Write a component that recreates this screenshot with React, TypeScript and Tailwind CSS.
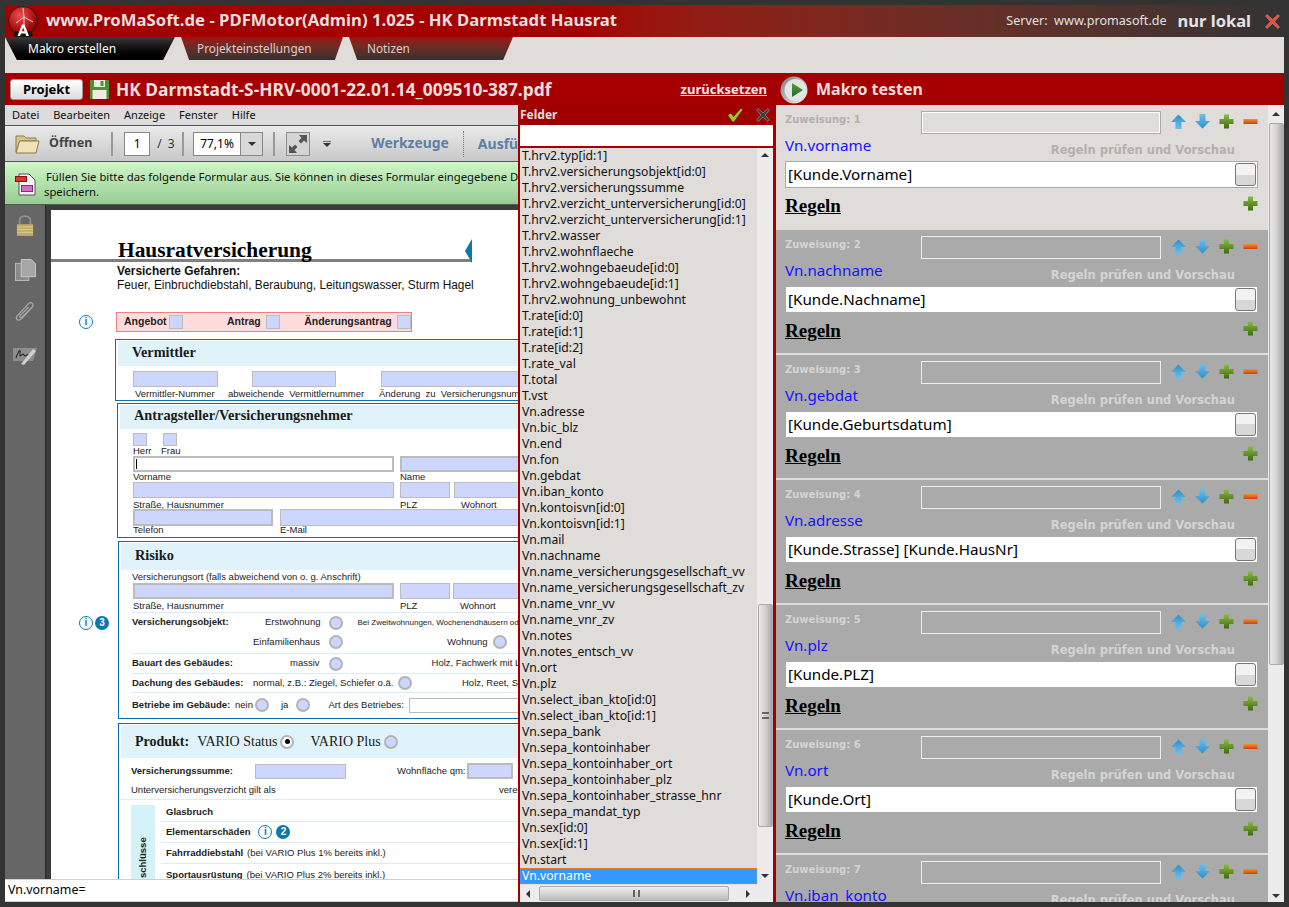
import React from 'react';

const uiFont = "font-['Noto_Sans','DejaVu_Sans',sans-serif]";
const pdfFont = "font-['Liberation_Sans',Arial,sans-serif]";

const fields = [
  'T.hrv2.typ[id:1]',
  'T.hrv2.versicherungsobjekt[id:0]',
  'T.hrv2.versicherungssumme',
  'T.hrv2.verzicht_unterversicherung[id:0]',
  'T.hrv2.verzicht_unterversicherung[id:1]',
  'T.hrv2.wasser',
  'T.hrv2.wohnflaeche',
  'T.hrv2.wohngebaeude[id:0]',
  'T.hrv2.wohngebaeude[id:1]',
  'T.hrv2.wohnung_unbewohnt',
  'T.rate[id:0]',
  'T.rate[id:1]',
  'T.rate[id:2]',
  'T.rate_val',
  'T.total',
  'T.vst',
  'Vn.adresse',
  'Vn.bic_blz',
  'Vn.end',
  'Vn.fon',
  'Vn.gebdat',
  'Vn.iban_konto',
  'Vn.kontoisvn[id:0]',
  'Vn.kontoisvn[id:1]',
  'Vn.mail',
  'Vn.nachname',
  'Vn.name_versicherungsgesellschaft_vv',
  'Vn.name_versicherungsgesellschaft_zv',
  'Vn.name_vnr_vv',
  'Vn.name_vnr_zv',
  'Vn.notes',
  'Vn.notes_entsch_vv',
  'Vn.ort',
  'Vn.plz',
  'Vn.select_iban_kto[id:0]',
  'Vn.select_iban_kto[id:1]',
  'Vn.sepa_bank',
  'Vn.sepa_kontoinhaber',
  'Vn.sepa_kontoinhaber_ort',
  'Vn.sepa_kontoinhaber_plz',
  'Vn.sepa_kontoinhaber_strasse_hnr',
  'Vn.sepa_mandat_typ',
  'Vn.sex[id:0]',
  'Vn.sex[id:1]',
  'Vn.start',
  'Vn.vorname',
];

const assignments = [
  { field: 'Vn.vorname', value: '[Kunde.Vorname]' },
  { field: 'Vn.nachname', value: '[Kunde.Nachname]' },
  { field: 'Vn.gebdat', value: '[Kunde.Geburtsdatum]' },
  { field: 'Vn.adresse', value: '[Kunde.Strasse] [Kunde.HausNr]' },
  { field: 'Vn.plz', value: '[Kunde.PLZ]' },
  { field: 'Vn.ort', value: '[Kunde.Ort]' },
  { field: 'Vn.iban_konto', value: '' },
];

const ArrowIcon = ({ down = false }: { down?: boolean }) => (
  <svg width="15" height="15" viewBox="0 0 15 15" className={down ? 'rotate-180' : ''}>
    <defs>
      <linearGradient id="blueUp" x1="0" y1="0" x2="0" y2="1">
        <stop offset="0" stopColor="#2f8fc8" />
        <stop offset="1" stopColor="#6cc0ee" />
      </linearGradient>
    </defs>
    <path d="M7.5 0.5 L15 8 L10.5 8 L10.5 15 L4.5 15 L4.5 8 L0 8 Z" fill="url(#blueUp)" />
  </svg>
);

const PlusIcon = () => (
  <svg width="15" height="15" viewBox="0 0 15 15">
    <defs>
      <linearGradient id="greenPlus" x1="0" y1="0" x2="0" y2="1">
        <stop offset="0" stopColor="#8db84a" />
        <stop offset="1" stopColor="#3f6c10" />
      </linearGradient>
    </defs>
    <path d="M5 0.5 H10 V5 H14.5 V10 H10 V14.5 H5 V10 H0.5 V5 H5 Z" fill="url(#greenPlus)" />
  </svg>
);

const MinusIcon = () => (
  <svg width="15" height="15" viewBox="0 0 15 15">
    <defs>
      <linearGradient id="orangeMinus" x1="0" y1="0" x2="0" y2="1">
        <stop offset="0" stopColor="#f09030" />
        <stop offset="1" stopColor="#d04010" />
      </linearGradient>
    </defs>
    <rect x="0.5" y="5" width="14" height="5" fill="url(#orangeMinus)" />
  </svg>
);

const Logo = () => (
  <svg width="32" height="33" viewBox="0 0 32 33" className="shrink-0">
    <defs>
      <radialGradient id="logoRed" cx="0.4" cy="0.3" r="0.8">
        <stop offset="0" stopColor="#e85050" />
        <stop offset="0.6" stopColor="#b01010" />
        <stop offset="1" stopColor="#600000" />
      </radialGradient>
    </defs>
    <circle cx="16" cy="16" r="14.5" fill="url(#logoRed)" stroke="#222" strokeWidth="1" />
    <path d="M17 12 L16 3 M17 12 L26 17 M17 12 L9 18 M17 12 L17 22" stroke="#f0d0d0" strokeWidth="1" fill="none" />
    <path d="M6 31 Q16 35 26 31 L24 26 L8 26 Z" fill="#181818" />
    <path d="M10.5 31 L15 19.5 L17.5 19.5 L22 31 L19.3 31 L18.4 28.4 L14 28.4 L13.1 31 Z M14.8 26.3 L17.6 26.3 L16.2 22.6 Z" fill="#fff" fillRule="evenodd" />
  </svg>
);

const FloppyIcon = () => (
  <svg width="21" height="21" viewBox="0 0 21 21" className="shrink-0">
    <rect x="0.5" y="0.5" width="20" height="20" fill="#4e8f38" stroke="#20401a" />
    <rect x="5" y="1" width="11" height="7" fill="#e8efe0" />
    <rect x="11.5" y="2" width="3" height="5" fill="#4e8f38" />
    <rect x="3.5" y="11" width="14" height="9" fill="#f4e8e8" />
  </svg>
);

const PlayIcon = () => (
  <svg width="28" height="28" viewBox="0 0 28 28" className="shrink-0">
    <defs>
      <linearGradient id="playRim" x1="0" y1="0" x2="1" y2="1">
        <stop offset="0" stopColor="#7c7c7c" />
        <stop offset="1" stopColor="#f4f4f4" />
      </linearGradient>
      <linearGradient id="playGreen" x1="0" y1="0" x2="0" y2="1">
        <stop offset="0" stopColor="#5aa040" />
        <stop offset="1" stopColor="#1c6a28" />
      </linearGradient>
    </defs>
    <circle cx="14" cy="14" r="13.5" fill="url(#playRim)" />
    <circle cx="15.5" cy="14" r="11" fill="#e4e4e4" />
    <path d="M12 7 L23 14 L12 21 Z" fill="url(#playGreen)" />
  </svg>
);

const FolderIcon = () => (
  <svg width="25" height="20" viewBox="0 0 25 20" className="shrink-0">
    <path d="M1 18 V2 H9 L11 4 H21 V7 H5 Z" fill="#d8c48c" stroke="#8a7a50" />
    <path d="M1 19 L4.5 7 H24 L21 19 Z" fill="#f2e3b4" stroke="#8a7a50" />
  </svg>
);

const ExpandIcon = () => (
  <svg width="24" height="24" viewBox="0 0 24 24" className="shrink-0">
    <rect x="0.5" y="0.5" width="23" height="23" fill="#d4d4d4" stroke="#8c8c8c" />
    <path d="M13 3 H21 V11 L18 8.5 L15 11.5 L12.5 9 L15.5 6 Z M11 21 H3 V13 L6 15.5 L9 12.5 L11.5 15 L8.5 18 Z" fill="#555" />
  </svg>
);

const LockIcon = () => (
  <svg width="18" height="22" viewBox="0 0 20 24" className="mb-[3px]">
    <path d="M4 11 V6 C4 -0.5 16 -0.5 16 6 V11" fill="none" stroke="#909090" strokeWidth="2" />
    <rect x="1" y="10" width="18" height="13" fill="#c2aa6a" />
    <path d="M1 13 H19 M1 16 H19 M1 19 H19" stroke="#e0d090" strokeWidth="1" />
  </svg>
);

const PagesIcon = () => (
  <svg width="21" height="23" viewBox="0 0 22 24">
    <rect x="0.5" y="4.5" width="14" height="18" fill="#8a8a8a" stroke="#b8b8b8" />
    <path d="M6.5 0.5 H17 L21.5 5 V18.5 H6.5 Z" fill="#a6a6a6" stroke="#cacaca" />
  </svg>
);

const ClipIcon = () => (
  <svg width="22" height="23" viewBox="0 0 24 26" className="mb-[3px]">
    <path d="M20 7 L8 20 C4 24 0 20 4 16 L16 3 C19 0 23 4 20 7 L9 18 C7 20 5 18 7 16 L16 7" fill="none" stroke="#a8a8a8" strokeWidth="1.5" />
  </svg>
);

const SignIcon = () => (
  <svg width="24" height="20" viewBox="0 0 24 20">
    <path d="M0 2 H24 L20 15 H0 Z" fill="#8e8e8e" />
    <path d="M3 12 C6 3 8 3 7 8 C6 13 10 6 11 9 C12 11 14 9 15 8" stroke="#303030" strokeWidth="1.2" fill="none" />
    <path d="M8 18 L20 3 L23 5 L11 19 Z" fill="#d0d0d0" />
  </svg>
);

const InfoIcon = () => (
  <span className="flex h-[14px] w-[14px] shrink-0 items-center justify-center rounded-full border border-[#0a78b0] bg-white text-[10px] leading-none font-bold text-[#0a78b0]">
    i
  </span>
);

const NumberBadge = ({ n }: { n: number }) => (
  <span className="flex h-[14px] w-[14px] shrink-0 items-center justify-center rounded-full bg-[#0a78b0] text-[10px] leading-none font-bold text-white">
    {n}
  </span>
);

const Radio = ({ checked = false, className = '' }: { checked?: boolean; className?: string }) => (
  <span className={`flex h-[14px] w-[14px] shrink-0 items-center justify-center rounded-full border-2 border-[#b4b4b4] ${checked ? 'bg-white' : 'bg-[#ccd6ff]'} ${className}`}>
    {checked && <span className="h-[5px] w-[5px] rounded-full bg-black" />}
  </span>
);

// blue form field with a caption below it
const Field = ({
  className,
  label,
  labelClass = 'h-[13px] leading-[13px]',
  boxClass = 'h-[16px] border bg-[#ccd6ff]',
}: {
  className: string;
  label?: string;
  labelClass?: string;
  boxClass?: string;
}) => (
  <div className={`shrink-0 ${className}`}>
    <div className={`border-[#bcbcbc] ${boxClass}`} />
    {label && <div className={`text-[9.5px] whitespace-pre text-[#222] ${labelClass}`}>{label}</div>}
  </div>
);

const SectionHead = ({ children, className }: { children: React.ReactNode; className: string }) => (
  <div className={`mx-[2px] mt-[1px] flex items-center bg-[#e1f3fa] pb-[2px] pl-[14px] font-['Liberation_Serif',serif] text-[14.3px] font-bold text-[#1a1a1a] ${className}`}>
    {children}
  </div>
);

const PdfPage = () => (
  <div className={`h-full w-[560px] overflow-hidden bg-white ${pdfFont}`}>
    {/* title */}
    <div className="pt-[28px]">
      <div className="flex h-[21px] w-[421px] items-start justify-between">
        <h1 className="ml-[67px] font-['Liberation_Serif',serif] text-[21.4px] leading-[25px] font-bold text-black">Hausratversicherung</h1>
        <span className="mt-[1px] h-[24px] w-[7px] bg-[#0a78b0] [clip-path:polygon(100%_0,100%_100%,0_50%)]" />
      </div>
      <div className="h-[3px] w-[421px] bg-[#808080]" />
      <div className="ml-[66px] mt-[2px] text-[11.87px] leading-[14px] whitespace-nowrap text-[#111]">
        <div className="font-bold">Versicherte Gefahren:</div>
        <div>Feuer, Einbruchdiebstahl, Beraubung, Leitungswasser, Sturm Hagel</div>
      </div>
    </div>

    {/* antrag type */}
    <div className="mt-[20px] flex h-[20px] items-center">
      <div className="flex w-[65px] pl-[28px]"><InfoIcon /></div>
      <div className="flex h-[20px] w-[296px] items-center border border-[#f08080] bg-[#ffdcdc] pl-[7px] text-[10.5px] font-bold text-[#222]">
        <span>Angebot</span>
        <span className="ml-[2px] h-[14px] w-[15px] border border-[#bcbcbc] bg-[#ccd6ff]" />
        <span className="ml-[44px]">Antrag</span>
        <span className="ml-[5px] h-[14px] w-[15px] border border-[#bcbcbc] bg-[#ccd6ff]" />
        <span className="ml-[24px]">Änderungsantrag</span>
        <span className="ml-[5px] h-[14px] w-[15px] border border-[#bcbcbc] bg-[#ccd6ff]" />
      </div>
    </div>

    {/* vermittler */}
    <div className="ml-[64px] mt-[7px] h-[62px] border border-[#0a70a8]">
      <SectionHead className="h-[25px]">Vermittler</SectionHead>
      <div className="mt-[5px] flex pl-[17px]">
        <Field className="w-[85px]" label="Vermittler-Nummer" labelClass="ml-[2px] h-[13px] leading-[13px]" />
        <Field className="ml-[34px] w-[84px]" label="abweichende  Vermittlernummer" labelClass="ml-[-24px] h-[13px] leading-[13px]" />
        <Field className="ml-[45px] w-[200px]" label="Änderung  zu  Versicherungsnummer" labelClass="ml-[-2px] h-[13px] leading-[13px]" />
      </div>
    </div>

    {/* antragsteller */}
    <div className="ml-[66px] mt-[2px] h-[135px] border border-[#0a70a8]">
      <SectionHead className="h-[24px]">Antragsteller/Versicherungsnehmer</SectionHead>
      <div className="mt-[4px] flex pl-[15px]">
        <div className="w-[30px]">
          <div className="h-[13px] w-[14px] border border-[#bcbcbc] bg-[#ccd6ff]" />
          <div className="h-[10px] text-[9.5px] leading-[10px] text-[#222]">Herr</div>
        </div>
        <div>
          <div className="h-[13px] w-[14px] border border-[#bcbcbc] bg-[#ccd6ff]" />
          <div className="ml-[-2px] h-[10px] text-[9.5px] leading-[10px] text-[#222]">Frau</div>
        </div>
      </div>
      <div className="flex pl-[15px]">
        <div className="w-[261px] shrink-0">
          <div className="flex h-[16px] items-center border-2 border-[#bcbcbc] bg-white pl-[1px]"><span className="h-[10px] w-[1px] bg-black" /></div>
          <div className="h-[9px] text-[9.5px] leading-[9px] text-[#222]">Vorname</div>
        </div>
        <Field className="ml-[6px] w-[200px]" boxClass="h-[16px] border-2 bg-[#ccd6ff]" label="Name" labelClass="h-[9px] leading-[9px]" />
      </div>
      <div className="mt-[1px] flex pl-[15px]">
        <Field className="w-[261px]" label="Straße, Hausnummer" />
        <Field className="ml-[6px] w-[50px]" label="PLZ" />
        <Field className="ml-[4px] w-[100px]" label="Wohnort" labelClass="ml-[7px] h-[13px] leading-[13px]" />
      </div>
      <div className="mt-[-2px] flex pl-[15px]">
        <Field className="w-[140px]" boxClass="h-[17px] border-2 bg-[#ccd6ff]" label="Telefon" labelClass="h-[7px] leading-[7px]" />
        <Field className="ml-[7px] w-[250px]" boxClass="h-[17px] border bg-[#ccd6ff]" label="E-Mail" labelClass="h-[7px] leading-[7px]" />
      </div>
    </div>

    {/* risiko */}
    <div className="mt-[3px] flex h-[178px]">
      <div className="flex w-[67px] shrink-0 gap-[2px] pl-[28px] pt-[75px]"><InfoIcon /><NumberBadge n={3} /></div>
      <div className="w-full border border-[#0a70a8]">
        <SectionHead className="h-[27px]">Risiko</SectionHead>
        <div className="mt-[1px] pl-[13px] text-[9.5px] leading-[12px] whitespace-nowrap text-[#222]">Versicherungsort (falls abweichend von o. g. Anschrift)</div>
        <div className="flex pl-[14px]">
          <Field className="w-[261px]" boxClass="h-[16px] border-2 bg-[#ccd6ff]" label="Straße, Hausnummer" />
          <Field className="ml-[6px] w-[50px]" label="PLZ" />
          <Field className="ml-[3px] w-[100px]" label="Wohnort" labelClass="ml-[7px] h-[13px] leading-[13px]" />
        </div>
        <div className="ml-[13px] h-[41px] border-t border-[#d8eef6]">
          <div className="flex h-[19px] items-center text-[9.5px] whitespace-nowrap text-[#222]">
            <span className="w-[133px] font-bold">Versicherungsobjekt:</span>
            <span>Erstwohnung</span>
            <Radio className="ml-[9px]" />
            <span className="ml-[14px] text-[8px]">Bei Zweitwohnungen, Wochenendhäusern oder</span>
          </div>
          <div className="flex h-[20px] items-center text-[9.5px] whitespace-nowrap text-[#222]">
            <span className="ml-[121px]">Einfamilienhaus</span>
            <Radio className="ml-[9px]" />
            <span className="ml-[104px]">Wohnung</span>
            <Radio className="ml-[5px]" />
          </div>
        </div>
        <div className="ml-[13px] flex h-[20px] items-center border-t border-[#d8eef6] text-[9.5px] whitespace-nowrap text-[#222]">
          <span className="w-[158px] font-bold">Bauart des Gebäudes:</span>
          <span>massiv</span>
          <Radio className="ml-[9px]" />
          <span className="ml-[89px]">Holz, Fachwerk mit Lehm</span>
        </div>
        <div className="ml-[13px] flex h-[19px] items-center border-t border-[#d8eef6] text-[9.5px] whitespace-nowrap text-[#222]">
          <span className="w-[121px] font-bold">Dachung des Gebäudes:</span>
          <span className="w-[145px]">normal, z.B.: Ziegel, Schiefer o.ä.</span>
          <Radio />
          <span className="ml-[50px]">Holz, Reet, Stroh</span>
        </div>
        <div className="ml-[13px] flex h-[25px] items-center border-t border-[#d8eef6] text-[9.5px] whitespace-nowrap text-[#222]">
          <span className="w-[103px] font-bold">Betriebe im Gebäude:</span>
          <span>nein</span>
          <Radio className="ml-[2px]" />
          <span className="ml-[12px]">ja</span>
          <Radio className="ml-[8px]" />
          <span className="ml-[18px]">Art des Betriebes:</span>
          <span className="ml-[5px] h-[15px] w-[150px] border border-[#bcbcbc] bg-white" />
        </div>
      </div>
    </div>

    {/* produkt */}
    <div className="ml-[67px] mt-[4px] h-[170px] border border-[#0a70a8]">
      <div className="mx-[2px] mt-[1px] flex h-[33px] items-center bg-[#e1f3fa] pl-[14px] font-['Liberation_Serif',serif] text-[14px] font-bold text-[#1a1a1a]">
        <span>Produkt:</span>
        <span className="ml-[8px] font-normal">VARIO Status</span>
        <Radio checked className="ml-[3px]" />
        <span className="ml-[16px] font-normal">VARIO Plus</span>
        <Radio className="ml-[3px]" />
      </div>
      <div className="mt-[5px] flex h-[16px] items-center pl-[12px] text-[9.5px] whitespace-nowrap text-[#222]">
        <span className="w-[124px] font-bold">Versicherungssumme:</span>
        <span className="h-[15px] w-[91px] border border-[#bcbcbc] bg-[#ccd6ff]" />
        <span className="ml-[51px] w-[70px]">Wohnfläche qm:</span>
        <span className="h-[16px] w-[46px] border-2 border-[#bcbcbc] bg-[#ccd6ff]" />
      </div>
      <div className="mt-[3px] flex h-[18px] items-center border-b border-[#d8eef6] pl-[12px] text-[9.5px] whitespace-nowrap text-[#222]">
        <span className="w-[368px]">Unterversicherungsverzicht  gilt  als</span>
        <span>vereinbart</span>
      </div>
      <div className="ml-[12px] mt-[5px] flex">
        <div className="flex h-[120px] w-[24px] shrink-0 justify-center bg-[#d5f1fa] pt-[33px]">
          <span className="h-[40px] rotate-180 text-[9.5px] leading-none font-bold whitespace-nowrap text-[#222] [writing-mode:vertical-rl]">schlüsse</span>
        </div>
        <div className="ml-[6px] w-full text-[9.5px] whitespace-nowrap text-[#222]">
          <div className="flex h-[17px] items-center border-b border-[#d8eef6] pb-[2px] pl-[5px] font-bold">Glasbruch</div>
          <div className="flex h-[21px] items-center border-b border-[#d8eef6] pl-[5px] font-bold">
            Elementarschäden
            <span className="ml-[8px]"><InfoIcon /></span>
            <span className="ml-[4px]"><NumberBadge n={2} /></span>
          </div>
          <div className="flex h-[21px] items-center border-b border-[#d8eef6] pl-[5px]">
            <b>Fahrraddiebstahl</b><span className="ml-[4px]">(bei VARIO Plus 1% bereits inkl.)</span>
          </div>
          <div className="flex h-[22px] items-center pl-[5px]">
            <b>Sportausrüstung</b><span className="ml-[4px]">(bei VARIO Plus 2% bereits inkl.)</span>
          </div>
        </div>
      </div>
    </div>
  </div>
);

const ScrollArrow = ({ dir }: { dir: 'up' | 'down' | 'left' | 'right' }) => {
  const shape = {
    up: 'border-x-[4px] border-b-[4px] border-x-transparent border-b-[#333]',
    down: 'border-x-[4px] border-t-[4px] border-x-transparent border-t-[#333]',
    left: 'border-y-[4px] border-r-[4px] border-y-transparent border-r-[#333]',
    right: 'border-y-[4px] border-l-[4px] border-y-transparent border-l-[#333]',
  }[dir];
  return <span className={`h-0 w-0 ${shape}`} />;
};

const FieldList = () => (
  <div className={`flex h-full w-[255px] shrink-0 flex-col border-l-2 border-[#a00000] bg-[#a00000] ${uiFont}`}>
    <div className="flex h-[20px] shrink-0 items-center justify-between pr-[3px]">
      <span className="text-[12px] font-bold text-[#e8dcdc]">Felder</span>
      <div className="flex items-center gap-[13px]">
        <svg width="16" height="14" viewBox="0 0 16 14">
          <path d="M1 7 L4 5.5 L6.5 9 L14 0.5 L15.5 1.5 L7 13.5 L5.5 13.5 Z" fill="#8fd030" />
        </svg>
        <svg width="14" height="14" viewBox="0 0 14 14">
          <path d="M2 0.5 L7 5 L12 0.5 L13.5 2 L9 7 L13.5 12 L12 13.5 L7 9 L2 13.5 L0.5 12 L5 7 L0.5 2 Z" fill="#3a3a3a" stroke="#b0b0b0" strokeWidth="0.6" />
        </svg>
      </div>
    </div>
    <div className="h-[21px] shrink-0 bg-white" />
    <div className="mt-[2px] flex min-h-0 flex-1 bg-[#e0dcd9]">
      <div className="flex min-w-0 flex-1 flex-col">
        <div className="min-h-0 flex-1 overflow-hidden">
          <ul className="text-[12.2px] leading-[16px] whitespace-nowrap text-[#111]">
            {fields.map((f) => (
              <li key={f} className={`pl-[2px] ${f === 'Vn.vorname' ? 'bg-[#3399ff] text-white outline-1 -outline-offset-1 outline-[#e08020] outline-dotted' : ''}`}>{f}</li>
            ))}
          </ul>
        </div>
        <div className="flex h-[17px] shrink-0 items-center bg-[#ececec]">
          <span className="flex w-[16px] justify-center"><ScrollArrow dir="left" /></span>
          <div className="ml-[3px] flex h-[15px] w-[190px] items-center justify-center rounded-[2px] border border-[#aaa] bg-gradient-to-b from-[#f0f0f0] to-[#bbb] pl-[4px]">
            <span className="h-[7px] w-[7px] border-x-2 border-[#666]" />
          </div>
          <span className="ml-[11px] flex w-[16px] justify-center"><ScrollArrow dir="right" /></span>
        </div>
      </div>
      <div className="flex w-[16px] shrink-0 flex-col items-center bg-[#ececec]">
        <span className="mt-[4px] flex h-[6px] items-center"><ScrollArrow dir="up" /></span>
        <div className="mt-[446px] flex h-[223px] w-[15px] items-center justify-center rounded-[2px] border border-[#aaa] bg-gradient-to-r from-[#e8e8e8] via-[#d0d0d0] to-[#a8a8a8]">
          <span className="h-[7px] w-[7px] border-y-2 border-[#666]" />
        </div>
        <span className="mt-[46px] flex h-[6px] items-center"><ScrollArrow dir="down" /></span>
      </div>
    </div>
  </div>
);

const AssignmentCard = ({ index, field, value }: { index: number; field: string; value: string }) => {
  const first = index === 0;
  const muted = first ? 'text-[#b4b0ae]' : 'text-[#d4d4d4]';
  return (
    <div className={`h-[125px] shrink-0 pl-[9px] pr-[10px] ${first ? 'bg-[#e0dcd9]' : 'border-b-2 border-[#dedede] bg-[#aaaaaa]'}`}>
      <div className="flex h-[29px] items-end">
        <span className={`w-[136px] pb-[7px] font-['DejaVu_Sans',sans-serif] text-[10px] font-bold ${muted}`}>Zuweisung: {index + 1}</span>
        <div className={`h-[23px] w-[241px] border ${first ? 'border-[#aaa] shadow-[inset_0_0_0_1px_#fff]' : 'border-[#eee]'}`} />
        <div className="mb-[1px] ml-[10px] flex h-[23px] items-center gap-[9px]">
          <ArrowIcon />
          <ArrowIcon down />
          <PlusIcon />
          <MinusIcon />
        </div>
      </div>
      <div className="mt-[-4px] flex h-[26px] items-end justify-between">
        <span className={`${uiFont} text-[15.2px] leading-[22px] text-[#1414ff]`}>{field}</span>
        <span className={`mb-[-3px] mr-[23px] font-['DejaVu_Sans',sans-serif] text-[11.5px] font-bold ${muted}`}>Regeln prüfen und Vorschau</span>
      </div>
      <div className="mt-[5px] flex h-[27px] items-center justify-between border border-[#aaa] bg-white pl-[2px] pr-[1px]">
        <span className={`${uiFont} text-[15.2px] text-black`}>{value}</span>
        <span className="h-[23px] w-[21px] rounded-[3px] border border-[#777] bg-gradient-to-b from-[#f2f2f2] from-50% to-[#d8d8d8] to-50%" />
      </div>
      <div className="mt-[7px] flex items-start justify-between">
        <span className="font-['Liberation_Serif',serif] text-[19px] leading-[22px] font-bold text-black underline">Regeln</span>
        <span className="mt-[1px]"><PlusIcon /></span>
      </div>
    </div>
  );
};

export default function App() {
  return (
    <div className={`flex h-[907px] w-[1289px] flex-col overflow-hidden bg-[#333] p-[5px] ${uiFont}`}>
      {/* title bar */}
      <div className="flex h-[32px] shrink-0 items-center bg-gradient-to-r from-[#a50000] from-45% to-[#333] pl-[2px] pr-[4px]">
        <Logo />
        <span className="mb-[3px] ml-[7px] text-[16.7px] font-bold whitespace-nowrap text-[#e8dede]">www.ProMaSoft.de - PDFMotor(Admin) 1.025 - HK Darmstadt Hausrat</span>
        <span className="ml-auto text-[12.6px] text-[#e0e0e0]">Server:&nbsp; www.promasoft.de</span>
        <span className="ml-[11px] text-[16.5px] font-bold text-[#e4e4e4]">nur lokal</span>
        <svg width="15" height="15" viewBox="0 0 15 15" className="ml-[14px]">
          <path d="M2 0.5 L7.5 5.5 L13 0.5 L14.5 2 L9.5 7.5 L14.5 13 L13 14.5 L7.5 9.5 L2 14.5 L0.5 13 L5.5 7.5 L0.5 2 Z" fill="#e05040" stroke="#f09080" strokeWidth="0.5" />
        </svg>
      </div>

      {/* tabs */}
      <div className="flex h-[36px] shrink-0 items-start bg-[#e0dcd9]">
        <div className="flex h-[23px] w-[170px] items-center bg-gradient-to-b from-[#3a3a3a] to-black pl-[23px] text-[12px] text-white [clip-path:polygon(0_0,100%_0,93%_100%,7%_100%)]">Makro erstellen</div>
        <div className="ml-[6px] flex h-[23px] w-[162px] items-center bg-gradient-to-b from-[#9a1010] to-[#353030] pl-[16px] text-[11.8px] text-[#d8d0d0] [clip-path:polygon(0_0,100%_0,95%_100%,5%_100%)]">Projekteinstellungen</div>
        <div className="ml-[6px] flex h-[23px] w-[164px] items-center bg-gradient-to-b from-[#9a1010] to-[#353030] pl-[18px] text-[11.8px] text-[#d8d0d0] [clip-path:polygon(0_0,100%_0,94%_100%,5%_100%)]">Notizen</div>
      </div>

      {/* main */}
      <div className="flex min-h-0 flex-1 border-t border-[#333]">
        {/* left */}
        <div className="flex w-[768px] shrink-0 flex-col">
          <div className="flex h-[31px] shrink-0 items-center bg-[#a50000] pl-[5px] pr-[6px]">
            <span className="flex h-[21px] w-[73px] items-center justify-center rounded-[3px] border border-[#999] bg-gradient-to-b from-white to-[#dcdcdc] text-[13px] font-bold text-black">Projekt</span>
            <span className="ml-[6px]"><FloppyIcon /></span>
            <span className="ml-[6px] text-[17.4px] font-bold whitespace-nowrap text-[#ecdede]">HK Darmstadt-S-HRV-0001-22.01.14_009510-387.pdf</span>
            <span className="ml-auto text-[13px] font-bold text-[#f0e4e4] underline">zurücksetzen</span>
          </div>
          <div className="flex min-h-0 flex-1">
            <div className="flex w-[513px] shrink-0 flex-col">
              {/* pdf viewer */}
              <div className="flex min-h-0 flex-1 flex-col overflow-hidden">
                <div className="flex h-[20px] shrink-0 items-center gap-[14px] bg-[#dcdcdc] pl-[7px] text-[11px] text-[#111]">
                  <span>Datei</span><span>Bearbeiten</span><span>Anzeige</span><span>Fenster</span><span>Hilfe</span>
                </div>
                <div className="flex h-[37px] shrink-0 items-center border-y border-[#555] bg-gradient-to-b from-[#eaeaea] to-[#c8c8c8] pl-[10px] text-[13px]">
                  <FolderIcon />
                  <span className="ml-[9px] text-[12.5px] font-bold text-[#444]">Öffnen</span>
                  <span className="ml-[19px] h-[24px] w-[2px] bg-[#999]" />
                  <span className="ml-[11px] flex h-[24px] w-[26px] items-center justify-center border border-[#888] bg-white text-[12px] text-black">1</span>
                  <span className="ml-[7px] text-[12px] text-[#333]">/&nbsp;&nbsp;3</span>
                  <span className="ml-[7px] h-[24px] w-[2px] bg-[#999]" />
                  <span className="ml-[9px] flex h-[24px] w-[71px] items-center border border-[#888] bg-white text-[12px] text-black">
                    <span className="flex-1 text-center">77,1%</span>
                    <span className="flex h-full w-[22px] items-center justify-center border-l border-[#888] bg-[#d8d8d8]"><ScrollArrow dir="down" /></span>
                  </span>
                  <span className="ml-[10px] h-[24px] w-[2px] bg-[#999]" />
                  <span className="ml-[11px]"><ExpandIcon /></span>
                  <span className="ml-[13px] flex flex-col items-center gap-[1px]">
                    <span className="h-[1px] w-[8px] bg-[#666]" />
                    <ScrollArrow dir="down" />
                  </span>
                  <span className="ml-[40px] text-[13.9px] font-bold text-[#5e7ea6]">Werkzeuge</span>
                  <span className="ml-[14px] h-[26px] border-l border-dotted border-[#777]" />
                  <span className="ml-[14px] overflow-hidden text-[14px] font-bold whitespace-nowrap text-[#5e7ea6]">Ausfü</span>
                </div>
                <div className="relative h-[43px] shrink-0 overflow-hidden border-b border-[#555] bg-gradient-to-b from-[#cdf7c6] to-[#98cc94] pl-[39px] pt-[7px] text-[11.3px] leading-[15px] whitespace-nowrap text-[#111]">
                  <svg width="21" height="23" viewBox="0 0 21 23" className="absolute top-[11px] left-[10px]">
                    <path d="M4 1 H14 L20 7 V22 H4 Z" fill="#f5f5f5" stroke="#555" />
                    <rect x="0.5" y="3.5" width="11" height="5" fill="#e83030" stroke="#901010" />
                    <rect x="6.5" y="12.5" width="11" height="6" fill="#d070c0" stroke="#803070" />
                  </svg>
                  <div className="pl-[2px]">Füllen Sie bitte das folgende Formular aus. Sie können in dieses Formular eingegebene Da</div>
                  <div>speichern.</div>
                </div>
                <div className="flex min-h-0 flex-1 bg-[#3c3c3c]">
                  <div className="flex w-[41px] shrink-0 flex-col items-center gap-[19px] border-r border-[#2a2a2a] bg-[#666] pt-[10px]">
                    <LockIcon />
                    <PagesIcon />
                    <ClipIcon />
                    <SignIcon />
                  </div>
                  <div className="ml-[5px] mt-[5px] min-w-0 flex-1 overflow-hidden"><PdfPage /></div>
                </div>
              </div>
              <div className="h-[23px] shrink-0 border-y border-[#d0d0d0] bg-white pl-[3px] text-[12.4px] leading-[20px] text-black">Vn.vorname=</div>
            </div>
            <FieldList />
          </div>
        </div>

        <div className="w-[3px] shrink-0 bg-[#a50000]" />

        {/* right */}
        <div className="flex min-w-0 flex-1 flex-col">
          <div className="flex h-[31px] shrink-0 items-center bg-[#a50000] pl-[4px]">
            <PlayIcon />
            <span className="mb-[1px] ml-[8px] text-[16px] font-bold text-[#ecdede]">Makro testen</span>
          </div>
          <div className="flex min-h-0 flex-1">
            <div className="flex min-w-0 flex-1 flex-col overflow-hidden">
              {assignments.map((a, i) => (
                <AssignmentCard key={a.field} index={i} field={a.field} value={a.value} />
              ))}
            </div>
            <div className="flex w-[16px] shrink-0 flex-col items-center bg-[#ececec]">
              <span className="mt-[6px] flex h-[6px] items-center"><ScrollArrow dir="up" /></span>
              <div className="mt-[6px] h-[542px] w-[15px] rounded-[2px] border border-[#aaa] bg-gradient-to-r from-[#e8e8e8] via-[#d4d4d4] to-[#a8a8a8]" />
              <span className="mt-auto mb-[3px] flex h-[6px] items-center"><ScrollArrow dir="down" /></span>
            </div>
          </div>
        </div>
      </div>
    </div>
  );
}
